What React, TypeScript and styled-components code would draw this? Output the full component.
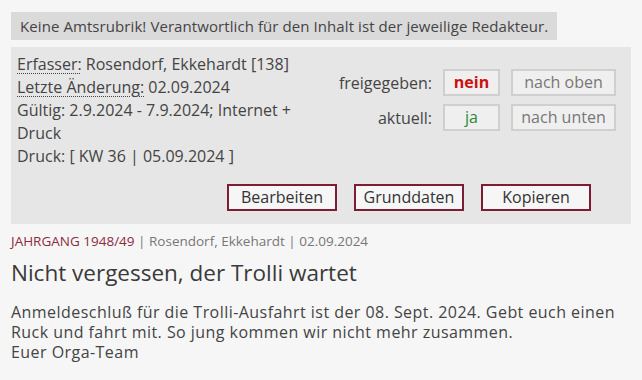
import React from "react";
import styled, { createGlobalStyle } from "styled-components";

const GlobalStyle = createGlobalStyle`
  html, body {
    margin: 0;
    padding: 0;
    background: #f6f6f6;
    font-family: "Open Sans", "Noto Sans", sans-serif;
    color: #444;
  }
`;

const Page = styled.div`
  padding: 12px 11px;
`;

const Notice = styled.div`
  display: inline-block;
  background: #dadada;
  color: #444;
  font-size: 15px;
  letter-spacing: 0.08px;
  line-height: 28px;
  padding: 0 9px;
`;

const AdminBox = styled.div`
  margin-top: 7px;
  background: #e6e6e6;
  padding: 6px 15px 13px 6px;
`;

const TopRow = styled.div`
  display: flex;
  justify-content: space-between;
`;

const Info = styled.div`
  width: 290px;
  font-size: 16px;
  line-height: 23px;
  color: #444;

  abbr {
    text-decoration: underline dotted;
    text-underline-offset: 3px;
    text-decoration-thickness: 1px;
  }
`;

const Status = styled.div`
  display: grid;
  grid-template-columns: auto 57px 105px;
  column-gap: 11px;
  row-gap: 8px;
  align-items: center;
  margin-top: 16px;
  align-self: flex-start;
`;

const StatusLabel = styled.span`
  font-size: 16px;
  text-align: right;
  color: #444;
`;

const Pill = styled.span<{ $tone?: "no" | "yes" }>`
  box-sizing: border-box;
  height: 27px;
  line-height: 23px;
  border: 2px solid #cfcfcf;
  background: #efefef;
  text-align: center;
  font-size: 16px;
  color: ${(p) => (p.$tone === "no" ? "#cc1111" : p.$tone === "yes" ? "#2a8a3a" : "#777")};
  font-weight: ${(p) => (p.$tone === "no" ? 700 : 400)};
`;

const Actions = styled.div`
  display: flex;
  justify-content: flex-end;
  gap: 17px;
  margin-top: 16px;
  padding-right: 25px;
`;

const ActionButton = styled.button`
  box-sizing: border-box;
  width: 110px;
  height: 27px;
  border: 2px solid #7d1c33;
  background: #f6f6f6;
  color: #333;
  font-family: "Open Sans", "Noto Sans", sans-serif;
  font-size: 16px;
  line-height: 23px;
  padding: 0;
  cursor: pointer;
`;

const Meta = styled.div`
  margin-top: 8px;
  font-size: 13.5px;
  line-height: 18px;
  color: #777;
`;

const Section = styled.span`
  color: #8c2a42;
`;

const Title = styled.h1`
  margin: 8px 0 0;
  font-size: 22.5px;
  font-weight: 400;
  line-height: 30px;
  color: #3a3a3a;
`;

const Body = styled.p`
  margin: 14px 0 0;
  font-size: 16px;
  letter-spacing: 0.45px;
  line-height: 20px;
  color: #444;
`;

export default function App() {
  return (
    <>
      <GlobalStyle />
      <Page>
        <Notice>
          Keine Amtsrubrik! Verantwortlich für den Inhalt ist der jeweilige Redakteur.
        </Notice>
        <AdminBox>
          <TopRow>
            <Info>
              <div>
                <abbr title="Erfasser">Erfasser:</abbr> Rosendorf, Ekkehardt [138]
              </div>
              <div>
                <abbr title="Letzte Änderung">Letzte Änderung:</abbr> 02.09.2024
              </div>
              <div>Gültig: 2.9.2024 - 7.9.2024; Internet + Druck</div>
              <div>Druck: [ KW 36 | 05.09.2024 ]</div>
            </Info>
            <Status>
              <StatusLabel>freigegeben:</StatusLabel>
              <Pill $tone="no">nein</Pill>
              <Pill>nach oben</Pill>
              <StatusLabel>aktuell:</StatusLabel>
              <Pill $tone="yes">ja</Pill>
              <Pill>nach unten</Pill>
            </Status>
          </TopRow>
          <Actions>
            <ActionButton>Bearbeiten</ActionButton>
            <ActionButton>Grunddaten</ActionButton>
            <ActionButton>Kopieren</ActionButton>
          </Actions>
        </AdminBox>
        <Meta>
          <Section>JAHRGANG 1948/49</Section> | Rosendorf, Ekkehardt | 02.09.2024
        </Meta>
        <Title>Nicht vergessen, der Trolli wartet</Title>
        <Body>
          Anmeldeschluß für die Trolli-Ausfahrt ist der 08. Sept. 2024. Gebt euch einen
          Ruck und fahrt mit. So jung kommen wir nicht mehr zusammen.
          <br />
          Euer Orga-Team
        </Body>
      </Page>
    </>
  );
}
